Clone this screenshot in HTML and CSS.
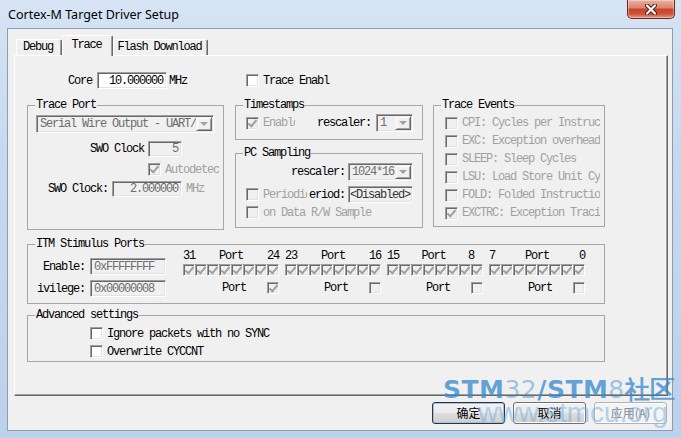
FILE: index.html
```html
<!DOCTYPE html>
<html>
  <head>
    <meta charset="utf-8">
    <title>Cortex-M Target Driver Setup</title>
    <link rel="stylesheet" href="styles.css">
  </head>
  <body>
    <div class="window">
      <div class="titlebar">
        <span class="title">Cortex-M Target Driver Setup</span>
        <div class="close">
          <svg width="14" height="11" viewBox="0 0 14 11">
            <path d="M3 1.5 L11 9.5 M11 1.5 L3 9.5" stroke="#4b1c14" stroke-width="4" stroke-linecap="round" />
            <path d="M3 1.5 L11 9.5 M11 1.5 L3 9.5" stroke="#fff" stroke-width="2.2" stroke-linecap="round" />
          </svg>
        </div>
      </div>

      <div class="client">
        <div class="tabs">
          <div class="tab tab-debug">Debug</div>
          <div class="tab tab-trace">Trace</div>
          <div class="tab tab-flash">Flash Download</div>
        </div>

        <div class="panel">
          <div class="row core-row">
            <span>Core</span>
            <span class="field right core-field">10.000000</span>
            <span class="mhz">MHz</span>
            <span class="cb trace-cb"></span>
            <span class="lbl">Trace Enabl</span>
          </div>

          <div class="groups">
            <fieldset class="group trace-port">
              <legend>Trace Port</legend>
              <div class="select dis port-select"><span class="val">Serial Wire Output - UART/NRZ</span><span class="arrow"></span></div>
              <div class="row swo-row">
                <span>SWO Clock</span>
                <span class="field dis right swo-div">5</span>
              </div>
              <div class="row auto-row">
                <span class="cb dis on"></span>
                <span class="lbl dim clip auto-clip">Autodetect</span>
              </div>
              <div class="row clock-row">
                <span>SWO Clock:</span>
                <span class="field dis right clock-field">2.000000</span>
                <span class="mhz dim">MHz</span>
              </div>
            </fieldset>

            <div class="middle">
              <fieldset class="group timestamps">
                <legend>Timestamps</legend>
                <div class="row ts-row">
                  <span class="cb dis on first-cb"></span>
                  <span class="lbl dim clip ts-clip">Enable</span>
                  <span class="ts-label">rescaler:</span>
                  <div class="select dis ts-select"><span class="val">1</span><span class="arrow"></span></div>
                </div>
              </fieldset>

              <fieldset class="group pc-sampling">
                <legend>PC Sampling</legend>
                <div class="row pc-row1">
                  <span class="pc-label">rescaler:</span>
                  <div class="select dis pc-select"><span class="val">1024*16</span><span class="arrow"></span></div>
                </div>
                <div class="row pc-row2">
                  <span class="cb dis first-cb"></span>
                  <span class="lbl dim clip pc-clip">Periodic</span>
                  <span class="period">eriod:</span>
                  <span class="field dis period-field">&lt;Disabled&gt;</span>
                </div>
                <div class="row pc-row3">
                  <span class="cb dis first-cb"></span>
                  <span class="lbl dim">on Data R/W Sample</span>
                </div>
              </fieldset>
            </div>

            <fieldset class="group trace-events">
              <legend>Trace Events</legend>
              <div class="row ev-row"><span class="cb dis"></span><span class="lbl dim clip ev-clip">CPI: Cycles per Instruction</span></div>
              <div class="row ev-row"><span class="cb dis"></span><span class="lbl dim clip ev-clip">EXC: Exception overhead</span></div>
              <div class="row ev-row"><span class="cb dis"></span><span class="lbl dim clip ev-clip">SLEEP: Sleep Cycles</span></div>
              <div class="row ev-row"><span class="cb dis"></span><span class="lbl dim clip ev-clip">LSU: Load Store Unit Cycles</span></div>
              <div class="row ev-row"><span class="cb dis"></span><span class="lbl dim clip ev-clip">FOLD: Folded Instructions</span></div>
              <div class="row ev-row"><span class="cb dis on"></span><span class="lbl dim clip ev-clip">EXCTRC: Exception Tracing</span></div>
            </fieldset>
          </div>

          <fieldset class="group itm">
            <legend>ITM Stimulus Ports</legend>
            <div class="itm-body">
              <div class="itm-left">
                <div class="row itm-field-row">
                  <span class="itm-label">Enable:</span>
                  <span class="field dis itm-field">0xFFFFFFFF</span>
                </div>
                <div class="row itm-field-row">
                  <span class="itm-label">ivilege:</span>
                  <span class="field dis itm-field">0x00000008</span>
                </div>
              </div>
              <div class="ports">
                <div class="port-group">
                  <div class="port-head"><span>31</span><span>Port</span><span>24</span></div>
                  <div class="port-boxes">
                    <span class="cb dis on"></span><span class="cb dis on"></span><span class="cb dis on"></span><span class="cb dis on"></span>
                    <span class="cb dis on"></span><span class="cb dis on"></span><span class="cb dis on"></span><span class="cb dis on"></span>
                  </div>
                  <div class="port-priv"><span>Port</span><span class="cb dis on"></span></div>
                </div>
                <div class="port-group">
                  <div class="port-head"><span>23</span><span>Port</span><span>16</span></div>
                  <div class="port-boxes">
                    <span class="cb dis on"></span><span class="cb dis on"></span><span class="cb dis on"></span><span class="cb dis on"></span>
                    <span class="cb dis on"></span><span class="cb dis on"></span><span class="cb dis on"></span><span class="cb dis on"></span>
                  </div>
                  <div class="port-priv"><span>Port</span><span class="cb dis"></span></div>
                </div>
                <div class="port-group">
                  <div class="port-head"><span>15</span><span>Port</span><span class="num-8">8</span></div>
                  <div class="port-boxes">
                    <span class="cb dis on"></span><span class="cb dis on"></span><span class="cb dis on"></span><span class="cb dis on"></span>
                    <span class="cb dis on"></span><span class="cb dis on"></span><span class="cb dis on"></span><span class="cb dis on"></span>
                  </div>
                  <div class="port-priv"><span>Port</span><span class="cb dis"></span></div>
                </div>
                <div class="port-group">
                  <div class="port-head"><span>7</span><span>Port</span><span>0</span></div>
                  <div class="port-boxes">
                    <span class="cb dis on"></span><span class="cb dis on"></span><span class="cb dis on"></span><span class="cb dis on"></span>
                    <span class="cb dis on"></span><span class="cb dis on"></span><span class="cb dis on"></span><span class="cb dis on"></span>
                  </div>
                  <div class="port-priv"><span>Port</span><span class="cb dis"></span></div>
                </div>
              </div>
            </div>
          </fieldset>

          <fieldset class="group advanced">
            <legend>Advanced settings</legend>
            <div class="row adv-row"><span class="cb"></span><span class="lbl">Ignore packets with no SYNC</span></div>
            <div class="row adv-row"><span class="cb"></span><span class="lbl">Overwrite CYCCNT</span></div>
          </fieldset>
        </div>

        <div class="buttons">
          <div class="btn default">确定</div>
          <div class="btn">取消</div>
          <div class="btn disabled">应用(A)</div>
        </div>
      </div>

      <!-- forum watermark burned into the screenshot -->
      <div class="watermark">
        <div class="wm-brand"><b>STM</b><span>32</span><b>/STM</b><span>8</span><b>社区</b></div>
        <div class="wm-url">www.stmcu.org</div>
      </div>
    </div>
  </body>
</html>
```

FILE: styles.css
```css
* {
  margin: 0;
  padding: 0;
  box-sizing: border-box;
}

body {
  width: 681px;
  height: 438px;
  overflow: hidden;
  background: #bfd3ea;
  font-family: "Liberation Mono", "Noto Sans CJK SC", monospace;
  font-size: 12px;
  line-height: 12px;
  letter-spacing: -1.2px;
  color: #000;
}

/* window frame */
.window {
  position: relative;
  width: 681px;
  height: 438px;
  display: flex;
  flex-direction: column;
  background: linear-gradient(180deg, #d6e4f4 0%, #c6d9ee 35%, #bcd1ea 100%);
}

.titlebar {
  height: 28px;
  display: flex;
  align-items: flex-start;
  justify-content: space-between;
}

.title {
  margin: 7px 0 0 8px;
  font-family: "Noto Sans", sans-serif;
  font-size: 12.5px;
  line-height: 16px;
  letter-spacing: 0;
}

.close {
  width: 48px;
  height: 19px;
  margin-right: 6px;
  border: 1px solid #6b2a1d;
  border-top: none;
  border-radius: 0 0 5px 5px;
  background: linear-gradient(180deg, #eab0a2 0%, #dc8670 42%, #c8452b 52%, #cf5337 78%, #e59a80 100%);
  box-shadow: inset 0 0 0 1px rgba(255, 255, 255, 0.35);
  display: flex;
  align-items: center;
  justify-content: center;
}

.client {
  margin: 0 8px 0 7px;
  height: 403px;
  background: #f0f0f0;
  border: 1px solid #8b9db3;
  display: flex;
  flex-direction: column;
}

/* tabs */
.tabs {
  height: 26px;
  display: flex;
  align-items: flex-end;
  padding-left: 8px;
}

.tab {
  height: 16px;
  border: 1px solid;
  border-color: #fff #696969 transparent #fff;
  border-bottom: none;
  border-radius: 2px 2px 0 0;
  box-shadow: inset -1px 0 #a0a0a0;
  background: #f0f0f0;
  text-align: center;
  line-height: 14px;
  padding-right: 2px;
}

.tab-debug { width: 46px; }
.tab-flash { width: 95px; }

.tab-trace {
  width: 51px;
  height: 21px;
  margin-bottom: -1px;
  line-height: 18px;
  position: relative;
  z-index: 1;
}

.panel {
  margin-left: 6px;
  width: 654px;
  height: 341px;
  border: 1px solid;
  border-color: #fff #696969 #696969 #fff;
  box-shadow: inset -1px -1px #a0a0a0;
  display: flex;
  flex-direction: column;
}

/* common controls */
.row {
  display: flex;
  align-items: center;
  white-space: nowrap;
}

.dim { color: #a0a0a0; }

.clip {
  overflow: hidden;
  white-space: nowrap;
}

.lbl { margin-left: 4px; }

.field {
  display: flex;
  align-items: center;
  height: 17px;
  padding: 0 3px;
  background: #fff;
  border: 1px solid;
  border-color: #a0a0a0 #fff #fff #a0a0a0;
  box-shadow: inset 1px 1px #696969, inset -1px -1px #e3e3e3;
  white-space: nowrap;
  overflow: hidden;
}

.field.dis {
  background: #f0f0f0;
  color: #6d6d6d;
}

.field.right { justify-content: flex-end; }

.cb {
  position: relative;
  flex: none;
  width: 13px;
  height: 13px;
  background: #fff;
  border: 1px solid;
  border-color: #a0a0a0 #fff #fff #a0a0a0;
  box-shadow: inset 1px 1px #696969, inset -1px -1px #e3e3e3;
}

.cb.dis { background: #f0f0f0; }

.cb.on::after {
  content: "";
  position: absolute;
  left: 3px;
  top: 0px;
  width: 3px;
  height: 7px;
  border: solid #a0a0a0;
  border-width: 0 2px 2px 0;
  transform: rotate(40deg);
}

.select {
  display: flex;
  height: 18px;
  padding: 1px;
  background: #f0f0f0;
  color: #6d6d6d;
  border: 1px solid;
  border-color: #a0a0a0 #fff #fff #a0a0a0;
  box-shadow: inset 1px 1px #696969, inset -1px -1px #e3e3e3;
}

.select .val {
  flex: 1;
  padding-left: 2px;
  line-height: 14px;
  overflow: hidden;
  white-space: nowrap;
}

.select .arrow {
  width: 16px;
  flex: none;
  display: flex;
  align-items: center;
  justify-content: center;
  border: 1px solid;
  border-color: #f0f0f0 #696969 #696969 #f0f0f0;
  box-shadow: inset 1px 1px #fff, inset -1px -1px #a0a0a0;
}

.select .arrow::after {
  content: "";
  border-left: 4px solid transparent;
  border-right: 4px solid transparent;
  border-top: 4px solid #a0a0a0;
}

/* group boxes */
.group {
  border: 1px solid #a6a6a6;
  min-width: 0;
}

.group legend {
  margin-left: 7px;
  padding: 0 1px;
  line-height: 12px;
  height: 12px;
}

/* core row */
.core-row {
  height: 17px;
  margin-top: 16px;
  padding-left: 53px;
}

.core-field {
  width: 70px;
  margin-left: 5px;
}

.mhz { margin-left: 2px; }

.trace-cb { margin-left: 59px; }

.groups {
  display: flex;
  margin-top: 10px;
  padding-left: 12px;
}

/* trace port */
.trace-port {
  width: 197px;
  height: 131px;
}

.port-select {
  width: 178px;
  margin: 4px 0 0 8px;
}

.swo-row {
  height: 16px;
  margin-top: 8px;
  padding-left: 62px;
}

.swo-div {
  width: 34px;
  height: 16px;
  margin-left: 4px;
}

.auto-row {
  height: 13px;
  margin-top: 6px;
  padding-left: 120px;
}

.auto-clip { width: 54px; }

.clock-row {
  height: 16px;
  margin-top: 5px;
  padding-left: 20px;
}

.clock-field {
  width: 70px;
  height: 16px;
  margin-left: 4px;
}

.clock-row .mhz { margin-left: 4px; }

/* middle column */
.middle {
  width: 188px;
  margin-left: 11px;
  display: flex;
  flex-direction: column;
  gap: 7px;
}

.timestamps { height: 41px; }

.first-cb { margin-left: 10px; }

.ts-row {
  height: 18px;
  margin-top: 3px;
}

.ts-clip { width: 32px; }

.ts-label { margin-left: 22px; }

.ts-select {
  width: 37px;
  margin-left: 5px;
}

.pc-sampling { height: 81px; }

.pc-row1 {
  height: 18px;
  margin-top: 4px;
  padding-left: 55px;
}

.pc-select {
  width: 65px;
  margin-left: 3px;
}

.pc-row2 {
  height: 17px;
  margin-top: 5px;
}

.pc-clip { width: 44px; }

.period { margin-left: 2px; }

.period-field {
  width: 65px;
  margin-left: 3px;
  padding: 0 1px;
  color: #333 !important;
}

.pc-row3 {
  height: 13px;
  margin-top: 3px;
}

/* trace events */
.trace-events {
  width: 172px;
  height: 128px;
  margin-left: 10px;
  padding-top: 3px;
}

.ev-row {
  height: 18px;
  padding-left: 11px;
}

.ev-clip { width: 138px; }

/* ITM stimulus ports */
.itm {
  width: 578px;
  height: 66px;
  margin: 8px 0 0 12px;
}

.itm-body { display: flex; }

.itm-left {
  width: 138px;
  padding-top: 8px;
  display: flex;
  flex-direction: column;
  gap: 5px;
}

.itm-label {
  width: 57px;
  text-align: right;
}

.itm-field {
  width: 76px;
  margin-left: 5px;
}

.ports {
  display: flex;
  gap: 6px;
  margin-left: 17px;
}

.port-group { width: 96px; }

.port-head {
  height: 12px;
  display: flex;
  justify-content: space-between;
}

.num-8 { margin-right: 9px; }

.port-boxes {
  display: flex;
  margin-top: 2px;
}

.port-boxes .cb {
  width: 12px;
  height: 12px;
}

.port-boxes .cb.on::after {
  left: 3px;
  top: 0;
}

.port-priv {
  display: flex;
  align-items: center;
  justify-content: space-between;
  height: 12px;
  margin-top: 6px;
  padding-left: 39px;
}

.port-priv .cb {
  width: 12px;
  height: 12px;
}

/* advanced */
.advanced {
  width: 578px;
  height: 53px;
  margin: 5px 0 0 12px;
  padding-top: 6px;
  display: flex;
  flex-direction: column;
  gap: 5px;
}

.adv-row {
  height: 13px;
  padding-left: 62px;
}

/* dialog buttons */
.buttons {
  display: flex;
  justify-content: flex-end;
  gap: 8px;
  margin-top: 6px;
  padding-right: 5px;
}

.btn {
  width: 73px;
  height: 22px;
  display: flex;
  align-items: center;
  justify-content: center;
  font-family: "Noto Sans CJK SC", sans-serif;
  font-size: 12px;
  letter-spacing: 0;
  border: 1px solid #707070;
  border-radius: 3px;
  background: linear-gradient(180deg, #f2f2f2 0%, #ebebeb 48%, #dddddd 52%, #cfcfcf 100%);
  box-shadow: inset 0 0 0 1px #fcfcfc;
}

.btn.default {
  border-color: #333;
  box-shadow: inset 0 0 0 1px #9cc4e4;
}

.btn.disabled {
  color: #8a8a8a;
  border-color: #adb2b5;
  background: #f4f4f4;
}

/* watermark */
.watermark {
  position: absolute;
  left: 443px;
  top: 377px;
  pointer-events: none;
  white-space: nowrap;
}

.wm-brand {
  font-family: "DejaVu Sans", sans-serif;
  font-size: 25px;
  line-height: 25px;
  letter-spacing: 0.5px;
  color: rgba(52, 136, 206, 0.75);
}

.wm-brand span {
  font-weight: normal;
  color: rgba(52, 136, 206, 0.45);
}

.wm-url {
  margin: -3px 0 0 35px;
  font-family: "Liberation Sans", sans-serif;
  font-size: 28px;
  line-height: 28px;
  letter-spacing: 0;
  color: rgba(110, 172, 222, 0.5);
}
```
